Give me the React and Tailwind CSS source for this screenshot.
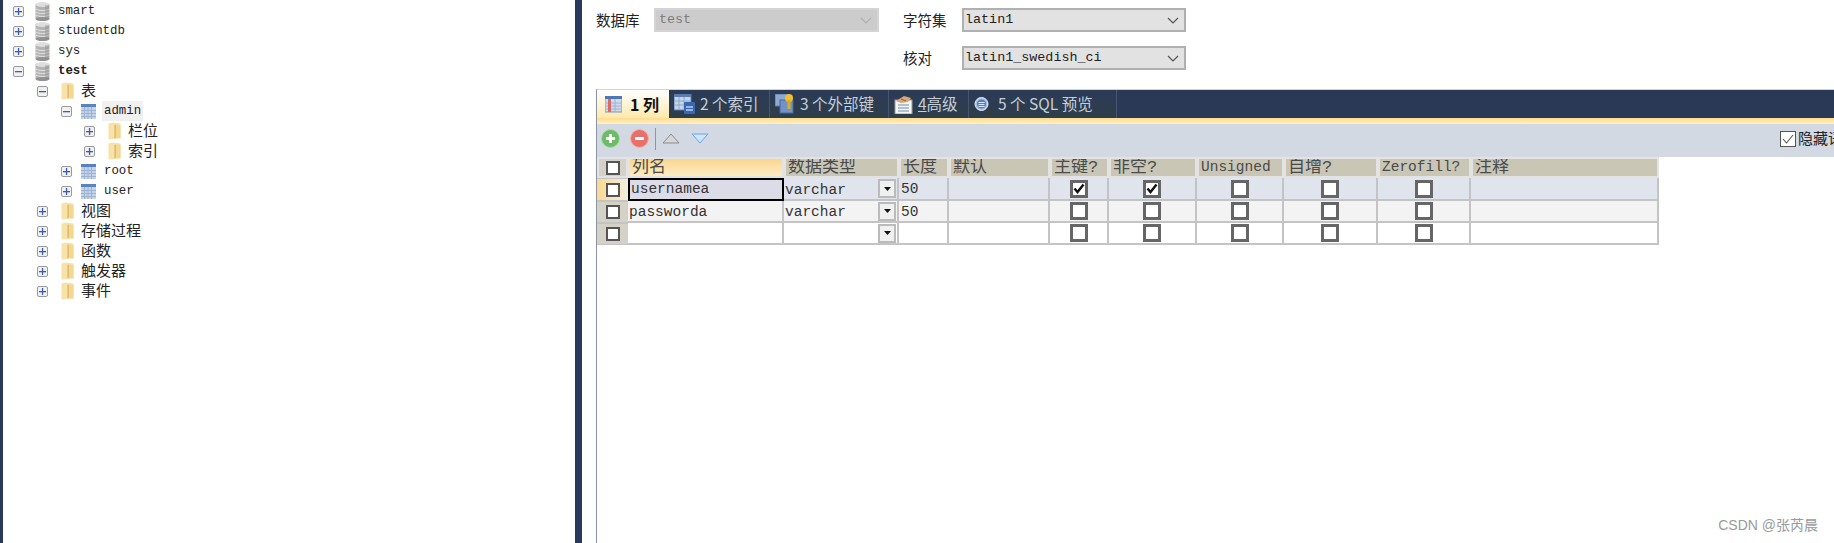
const mono = "font-['Liberation_Mono','Noto_Sans_CJK_SC',monospace]";
const cjk = "font-['Noto_Sans_CJK_SC','Liberation_Sans',sans-serif]";
const sans = "font-['Liberation_Sans','Noto_Sans_CJK_SC',sans-serif]";

const treeRows = [
  { label: "smart", pad: "pl-[10px]", box: "+", icon: "db" },
  { label: "studentdb", pad: "pl-[10px]", box: "+", icon: "db" },
  { label: "sys", pad: "pl-[10px]", box: "+", icon: "db" },
  { label: "test", pad: "pl-[10px]", box: "-", icon: "db", bold: true },
  { label: "表", pad: "pl-[34px]", box: "-", icon: "folder" },
  { label: "admin", pad: "pl-[58px]", box: "-", icon: "table", selected: true },
  { label: "栏位", pad: "pl-[81px]", box: "+", icon: "folder" },
  { label: "索引", pad: "pl-[81px]", box: "+", icon: "folder" },
  { label: "root", pad: "pl-[58px]", box: "+", icon: "table" },
  { label: "user", pad: "pl-[58px]", box: "+", icon: "table" },
  { label: "视图", pad: "pl-[34px]", box: "+", icon: "folder" },
  { label: "存储过程", pad: "pl-[34px]", box: "+", icon: "folder" },
  { label: "函数", pad: "pl-[34px]", box: "+", icon: "folder" },
  { label: "触发器", pad: "pl-[34px]", box: "+", icon: "folder" },
  { label: "事件", pad: "pl-[34px]", box: "+", icon: "folder" },
];

const columns = [
  { name: "列名", active: true, big: true },
  { name: "数据类型", big: true },
  { name: "长度", big: true },
  { name: "默认", big: true },
  { name: "主键?", big: true },
  { name: "非空?", big: true },
  { name: "Unsigned" },
  { name: "自增?", big: true },
  { name: "Zerofill?" },
  { name: "注释", big: true },
];

const rows = [
  { name: "usernamea", type: "varchar", len: "50", pk: true, notNull: true, bg: "bg-[#e0e4ed]", active: true },
  { name: "passworda", type: "varchar", len: "50", bg: "bg-[#f3f3f3]" },
  { name: "", type: "", len: "", bg: "bg-white" },
];

const tabs = [
  { label: "2 个索引", icon: "index", width: "w-[101px]" },
  { label: "3 个外部键", icon: "key", width: "w-[119px]" },
  { label: "高级", icon: "adv", width: "w-[80px]", mnemonic: "4" },
  { label: "5 个 SQL 预览", icon: "sql", width: "w-[148px]" },
];

function ExpandBox({ type }) {
  return (
    <span className="flex h-[11px] w-[11px] shrink-0 items-center justify-center rounded-[2px] border border-[#9a9a9a] bg-[#f1f1f1]">
      <svg width="7" height="7" viewBox="0 0 7 7">
        <rect x="0" y="3" width="7" height="1.3" fill={type === "+" ? "#3b5db0" : "#4a5f9a"} />
        {type === "+" && <rect x="2.9" y="0" width="1.3" height="7" fill="#3b5db0" />}
      </svg>
    </span>
  );
}

function DbIcon() {
  return (
    <svg width="15" height="19" viewBox="0 0 15 19" className="ml-[11px] shrink-0">
      <rect x="0.5" y="2" width="14" height="15" fill="#b4b4b4" />
      <ellipse cx="7.5" cy="17" rx="7" ry="2" fill="#929292" />
      <ellipse cx="7.5" cy="2.5" rx="7" ry="2.5" fill="#dedede" />
      <path d="M1 7c3 2 10 2 13 0M1 10c3 2 10 2 13 0M1 13c3 2 10 2 13 0" stroke="#e4e4e4" strokeWidth="1" fill="none" />
      <rect x="10" y="3" width="4" height="14" fill="#7f7f7f" opacity="0.3" />
    </svg>
  );
}

function FolderIcon() {
  return (
    <svg width="13" height="18" viewBox="0 0 13 18" className="ml-[13px] shrink-0">
      <path d="M0.5 1.5 5 0.5 12.5 1.5V16.5L0.5 17.5Z" fill="#f8e2a8" />
      <path d="M6.5 3 7.8 2.5V15.5L6.5 16.5Z" fill="#d0ae62" />
      <path d="M7.8 2.5 12.5 3V16.5L7.8 15.5Z" fill="#f5d88f" />
    </svg>
  );
}

function TableIcon() {
  return (
    <svg width="15" height="15" viewBox="0 0 15 15" className="ml-[9px] shrink-0">
      <rect width="15" height="15" fill="#c4d3e8" />
      <rect width="15" height="3" fill="#5a82bd" />
      <path d="M0 6.5h15M0 9.5h15M0 12.5h15M3.5 3v12M7 3v12M10.5 3v12" stroke="#9cb3d4" strokeWidth="1" />
    </svg>
  );
}

function TreeRow({ row }) {
  const isCjk = /[^a-z]/.test(row.label);
  return (
    <div className={`flex h-5 items-center ${row.pad}`}>
      <ExpandBox type={row.box} />
      {row.icon === "db" && <DbIcon />}
      {row.icon === "folder" && <FolderIcon />}
      {row.icon === "table" && <TableIcon />}
      {isCjk ? (
        <span className={`ml-[7px] -translate-y-px text-[15px] text-[#222] ${cjk}`}>{row.label}</span>
      ) : row.selected ? (
        <span className={`ml-[6px] bg-[#f0f0f0] px-[2px] text-[12.4px] leading-5 text-[#222] ${mono}`}>{row.label}</span>
      ) : (
        <span className={`ml-2 text-[12.4px] text-[#222] ${row.bold ? "font-bold" : ""} ${mono}`}>
          {row.label}
        </span>
      )}
    </div>
  );
}

function SelectBox({ value, disabled }) {
  return (
    <div
      className={`flex items-center justify-between border-2 pl-[1px] pr-[5px] text-[13.4px] ${mono} ${
        disabled ? "border-[#d4d4d4] bg-[#cccccc] pl-[3px] text-[12.5px] text-[#7d7d7d]" : "border-[#b0b0b0] bg-[#e2e2e2] text-[#222]"
      }`}
    >
      <span>{value}</span>
      <svg width="12" height="7" viewBox="0 0 12 7">
        <path d="M1 1l5 5 5-5" fill="none" stroke={disabled ? "#b0b0b0" : "#555"} strokeWidth="1.2" />
      </svg>
    </div>
  );
}

function TabIcon({ type }) {
  if (type === "index") {
    return (
      <svg width="21" height="20" viewBox="0 0 21 20" className="shrink-0">
        <rect width="17" height="16" y="0" fill="#c7d5e8" stroke="#5b7cae" />
        <rect width="17" height="3" fill="#5b7cae" />
        <path d="M0 7h17M0 11h17M5 3v13M10 3v13" stroke="#8ea7cc" />
        <rect x="10" y="8" width="11" height="12" rx="1" fill="#3768b4" />
        <path d="M12 13h7M12 16h7" stroke="#fff" strokeWidth="1.2" />
      </svg>
    );
  }
  if (type === "key") {
    return (
      <svg width="20" height="20" viewBox="0 0 20 20" className="shrink-0">
        <rect width="13" height="12" fill="#8fa9cf" stroke="#5b7cae" />
        <rect x="5" y="6" width="13" height="13" fill="#6f93c6" stroke="#46699f" />
        <circle cx="14" cy="4" r="4" fill="#f0c030" />
        <rect x="12.5" y="6" width="3" height="9" fill="#e0aa20" />
      </svg>
    );
  }
  if (type === "adv") {
    return (
      <svg width="19" height="19" viewBox="0 0 19 19" className="shrink-0">
        <rect x="1" y="5" width="17" height="14" fill="#f6f6f0" stroke="#999" />
        <path d="M4 10h11M4 13h11M4 16h11" stroke="#6a8abd" />
        <path d="M2 6 10 1l7 2-3 4-7 1Z" fill="#d9a679" />
        <path d="M7 4l5 2" stroke="#8e6238" />
      </svg>
    );
  }
  return (
    <svg width="19" height="19" viewBox="0 0 19 19" className="shrink-0">
      <path d="M11 12l7 6" stroke="#3d3a36" strokeWidth="2" />
      <circle cx="7.5" cy="9" r="6.5" fill="#a6c0e6" stroke="#e6eef8" />
      <circle cx="7.5" cy="9" r="4.5" fill="#4f7fc4" />
      <path d="M4.5 7.5h6M4.5 9.5h6M4.5 11.5h6" stroke="#dfe9f6" />
    </svg>
  );
}

function ActiveTabIcon() {
  return (
    <svg width="17" height="17" viewBox="0 0 17 17" className="shrink-0">
      <rect width="17" height="16" fill="#d2dbe8" stroke="#7d97bd" />
      <rect width="17" height="3" fill="#4d78b8" />
      <path d="M1 7h15M1 10h15M1 13h15M10 3v13" stroke="#9db2d2" />
      <rect x="3" y="3" width="3" height="13" fill="#d86a6a" />
    </svg>
  );
}

function RoundButton({ color, sign }) {
  const fill = color === "green" ? "#6dbb69" : "#e9706a";
  const edge = color === "green" ? "#a9d9a5" : "#f3b0ab";
  return (
    <svg width="19" height="19" viewBox="0 0 19 19" className="shrink-0">
      <circle cx="9.5" cy="9.5" r="9" fill={fill} stroke={edge} />
      <rect x="5" y="8" width="9" height="3" rx="0.5" fill="#fff" />
      {sign === "+" && <rect x="8" y="5" width="3" height="9" rx="0.5" fill="#fff" />}
    </svg>
  );
}

function CheckBox({ checked }) {
  return (
    <span className="flex h-[18px] w-[18px] items-center justify-center border-[3px] border-[#666] bg-white">
      {checked && (
        <svg width="12" height="11" viewBox="0 0 12 11">
          <path d="M1.5 5.5 4.5 9 10.5 1.5" fill="none" stroke="#111" strokeWidth="2.4" />
        </svg>
      )}
    </span>
  );
}

function RowHeaderBox() {
  return <span className="block h-[14px] w-[14px] border-2 border-[#555] bg-white" />;
}

function TypeButton() {
  return (
    <span className="ml-auto mr-[1px] flex h-[19px] w-[18px] shrink-0 items-center justify-center border-2 border-[#bbb] bg-[#f0f0f0]">
      <svg width="7" height="4" viewBox="0 0 7 4">
        <path d="M0 0h7L3.5 4Z" fill="#111" />
      </svg>
    </span>
  );
}

export default function App() {
  return (
    <div className="flex h-[543px] w-[1834px] overflow-hidden bg-white">
      <div className="w-[3px] shrink-0 bg-[#29395a]" />

      {/* object tree */}
      <div className="w-[572px] shrink-0 pt-px">
        {treeRows.map((row) => (
          <TreeRow key={row.label} row={row} />
        ))}
      </div>

      <div className="w-[7px] shrink-0 bg-[#29395a]" />

      <div className="flex min-w-0 flex-1 flex-col pl-[14px]">
        {/* database / charset form */}
        <div className="grid h-[89px] shrink-0 grid-cols-[58px_225px_83px_224px] grid-rows-[24px_24px] items-stretch gap-y-[14px] pt-[8px] text-[14.5px] text-[#222]">
          <span className={`self-center ${cjk}`}>数据库</span>
          <SelectBox value="test" disabled />
          <span className={`self-center pl-6 ${cjk}`}>字符集</span>
          <SelectBox value="latin1" />
          <span className="col-start-3 self-center pl-6">
            <span className={cjk}>核对</span>
          </span>
          <SelectBox value="latin1_swedish_ci" />
        </div>

        <div className="flex min-h-0 flex-1 flex-col border-t border-l border-t-[#d4d4d4] border-l-[#8a94a3]">
          {/* tabs */}
          <div className="flex h-7 shrink-0 bg-[#2a3a56]">
            <div className="flex w-[72px] items-center gap-[8px] bg-gradient-to-b from-white to-[#ffe8ab] pl-2">
              <ActiveTabIcon />
              <span className={`text-[16px] font-bold text-[#111] ${cjk}`}>1 列</span>
            </div>
            {tabs.map((tab) => (
              <div
                key={tab.label}
                className={`flex ${tab.width} items-center gap-[5px] border-r border-[#46566f] bg-gradient-to-b from-[#2b3b58] to-[#2e3d48] pl-[5px] text-[15.5px] text-[#c6cfdb] ${cjk}`}
              >
                <TabIcon type={tab.icon} />
                <span className="whitespace-nowrap">
                  {tab.mnemonic && <u>{tab.mnemonic}</u>}
                  {tab.label}
                </span>
              </div>
            ))}
          </div>
          <div className="h-[6px] shrink-0 bg-gradient-to-b from-[#fddc8c] to-[#fff1c6]" />

          {/* toolbar */}
          <div className="flex h-[33px] shrink-0 items-center bg-[#d2d9e3] pb-[4px] pl-1">
            <RoundButton color="green" sign="+" />
            <span className="ml-[10px]">
              <RoundButton color="red" sign="-" />
            </span>
            <span className="ml-[6px] h-[22px] w-px bg-[#8f959d]" />
            <svg width="18" height="11" viewBox="0 0 18 11" className="ml-[6px]">
              <path d="M1 10 9 1l8 9Z" fill="#d6d6d6" stroke="#8c8c8c" />
            </svg>
            <svg width="18" height="11" viewBox="0 0 18 11" className="ml-[11px]">
              <path d="M1 1h16L9 10Z" fill="#cfe4f8" stroke="#62a9e6" />
            </svg>
            <div className="ml-auto flex w-[54px] shrink-0 items-center gap-[2px] overflow-hidden">
              <span className="flex h-4 w-4 shrink-0 items-center justify-center border border-[#555] bg-white">
                <svg width="12" height="10" viewBox="0 0 12 10">
                  <path d="M1 5l3.5 4L11 1" fill="none" stroke="#555" strokeWidth="1.1" />
                </svg>
              </span>
              <span className={`whitespace-nowrap text-[15px] text-[#222] ${cjk}`}>隐藏语言选项</span>
            </div>
          </div>

          {/* column grid */}
          <div className="grid w-[1062px] grid-cols-[31px_156px_115px_50px_101px_59px_88px_87px_94px_93px_188px] grid-rows-[21px_23px_22px_22px]">
            <div className="flex items-center justify-center border-2 border-[#e3e3e3] bg-[#d4d2c6]">
              <RowHeaderBox />
            </div>
            {columns.map((col) => (
              <div
                key={col.name}
                className={`flex items-center overflow-hidden whitespace-nowrap border-2 border-[#e3e3e3] pl-[2px] text-[#4a4a4a] ${
                  col.big ? "text-[17px]" : "text-[14.5px]"
                } ${col.active ? "bg-gradient-to-b from-[#f9d68e] to-[#fdecc4]" : "bg-[#c9c6b6]"} ${mono}`}
              >
                {col.name}
              </div>
            ))}

            {rows.map((row, i) => (
              <div key={i} className="contents">
                <div
                  className={`flex items-center justify-center border-y border-[#c4c4c4] ${
                    row.active ? "bg-gradient-to-r from-[#fbd98f] to-[#f1eee0]" : "bg-[#d4d2c6]"
                  }`}
                >
                  <RowHeaderBox />
                </div>
                <div
                  className={`flex items-center pl-[1px] text-[14.5px] text-[#333] ${mono} ${
                    row.active
                      ? "border-2 border-black bg-[#dcdce9]"
                      : `border-r-2 border-b-2 border-[#c4c4c4] pt-[3px] ${row.bg}`
                  }`}
                >
                  {row.name}
                </div>
                <div className={`flex items-center border-r-2 border-b-2 border-[#c4c4c4] pl-[1px] text-[14.5px] text-[#333] ${row.bg} ${mono}`}>
                  <span className="translate-y-[2px]">{row.type}</span>
                  <TypeButton />
                </div>
                <div className={`flex items-center border-r-2 border-b-2 border-[#c4c4c4] pl-[2px] pt-[3px] text-[14.5px] text-[#333] ${row.bg} ${mono}`}>
                  {row.len}
                </div>
                <div className={`border-r-2 border-b-2 border-[#c4c4c4] ${row.bg}`} />
                {[row.pk, row.notNull, false, false, false].map((checked, c) => (
                  <div key={c} className={`flex items-center justify-center border-r-2 border-b-2 border-[#c4c4c4] ${row.bg}`}>
                    <CheckBox checked={checked} />
                  </div>
                ))}
                <div className={`border-r-2 border-b-2 border-[#c4c4c4] ${row.bg}`} />
              </div>
            ))}
          </div>

          <div className="mt-auto flex justify-end pb-[7px] pr-4 text-[14px] text-[#9a9a9a]">
            <span className={sans}>CSDN @张芮晨</span>
          </div>
        </div>
      </div>
    </div>
  );
}
